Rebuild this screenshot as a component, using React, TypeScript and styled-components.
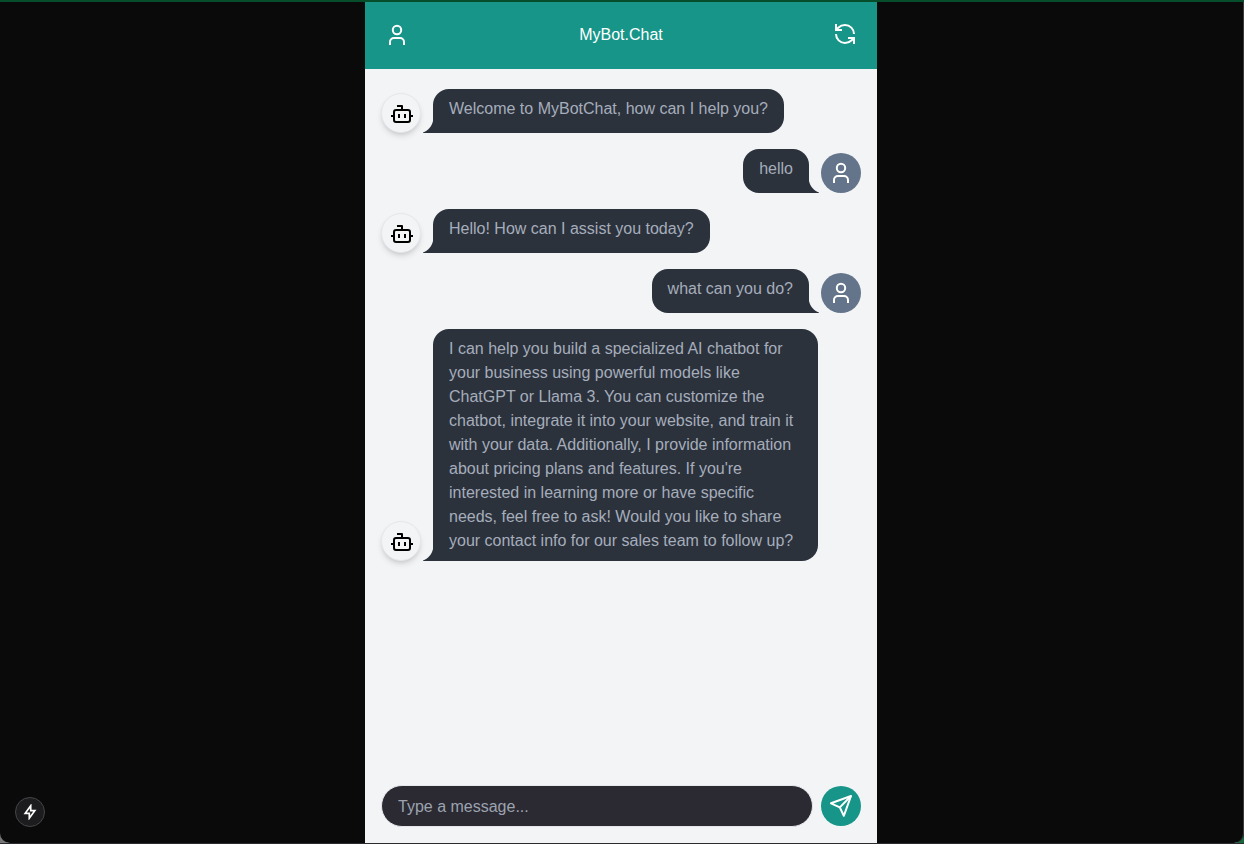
import React, { useState } from "react";
import styled, { createGlobalStyle, css } from "styled-components";
import { Bot } from "lucide-react";

const teal = "#169588";
const bubbleColor = "#2b323c";
const surface = "#f3f4f6";

const GlobalStyle = createGlobalStyle`
  *, *::before, *::after { box-sizing: border-box; }
  html, body, #root { height: 100%; }
  body {
    margin: 0;
    background: #0a0a0a;
    font-family: "Liberation Sans", Arial, sans-serif;
    font-size: 16px;
    line-height: 24px;
  }
  button, input { font: inherit; }
  button { border: 0; padding: 0; cursor: pointer; }
`;

const Page = styled.div`
  position: relative;
  display: flex;
  justify-content: center;
  height: 100%;
  min-height: 480px;
  padding-right: 2px;
  border-top: 2px solid #064e2b;
  border-bottom: 1px solid #2c2c30;
  overflow: hidden;
`;

const EdgeLine = styled.div`
  position: absolute;
  inset: 0;
  border-right: 1px solid #3c3c40;
  border-radius: 0 0 10px 10px;
  box-shadow: -6px 6px 0 #77777a, 6px 6px 0 #17663c;
  pointer-events: none;
`;

const Chat = styled.main`
  display: flex;
  flex-direction: column;
  width: 100%;
  max-width: 512px;
  background: ${surface};
`;

const Header = styled.header`
  display: flex;
  align-items: center;
  justify-content: space-between;
  height: 67px;
  padding: 0 20px 1px;
  background: ${teal};
  color: #fff;
`;

const Title = styled.h1`
  margin: 0;
  font-size: 16px;
  font-weight: 400;
`;

const HeaderButton = styled.button`
  display: flex;
  background: transparent;
  color: inherit;
`;

const Messages = styled.section`
  display: flex;
  flex: 1;
  flex-direction: column;
  gap: 16px;
  min-height: 0;
  padding: 20px 16px;
  overflow: hidden;
`;

const Row = styled.div<{ $own?: boolean }>`
  display: flex;
  flex-direction: ${(p) => (p.$own ? "row-reverse" : "row")};
  align-items: flex-end;
  gap: 12px;
`;

const Avatar = styled.div<{ $own?: boolean }>`
  display: flex;
  flex: none;
  align-items: center;
  justify-content: center;
  width: 40px;
  height: 40px;
  border-radius: 50%;
  ${(p) =>
    p.$own
      ? css`
          background: #64748b;
          color: #fff;
        `
      : css`
          padding: 2px 0 0 2px;
          border: 1px solid #e5e7eb;
          background: ${surface};
          color: #000;
          box-shadow: 0 4px 6px -1px rgba(0, 0, 0, 0.12), 0 2px 4px -2px rgba(0, 0, 0, 0.12);
        `}
`;

const Bubble = styled.div<{ $own?: boolean }>`
  position: relative;
  max-width: 385px;
  min-height: 44px;
  padding: 8px 16px;
  border-radius: ${(p) => (p.$own ? "16px 16px 0 16px" : "16px 16px 16px 0")};
  background: ${bubbleColor};
  color: #a6adbb;
`;

const TailShape = styled.svg<{ $own?: boolean }>`
  position: absolute;
  bottom: 0;
  ${(p) => (p.$own ? "left: 100%;" : "right: 100%; transform: scaleX(-1);")}
`;

const BubbleText = styled.p`
  margin: 0;
`;

const Composer = styled.form`
  display: flex;
  gap: 8px;
  padding: 16px;
`;

const MessageInput = styled.input`
  flex: 1;
  min-width: 0;
  height: 42px;
  padding: 2px 16px 0;
  border: 1px solid #e5e7eb;
  border-radius: 21px;
  background: #2b2a33;
  color: #fff;
  &::placeholder { color: #9ca3af; opacity: 1; }
`;

const SendButton = styled.button`
  display: flex;
  flex: none;
  align-items: center;
  align-self: center;
  justify-content: center;
  width: 40px;
  height: 40px;
  border-radius: 50%;
  background: ${teal};
  color: #fff;
`;

const DevButton = styled.button`
  position: absolute;
  bottom: 16px;
  left: 15px;
  display: flex;
  align-items: center;
  justify-content: center;
  width: 30px;
  height: 30px;
  border: 1px solid #454548;
  border-radius: 50%;
  background: #1c1c1f;
  color: #fff;
`;

const messages = [
  { own: false, text: "Welcome to MyBotChat, how can I help you?" },
  { own: true, text: "hello" },
  { own: false, text: "Hello! How can I assist you today?" },
  { own: true, text: "what can you do?" },
  {
    own: false,
    text: "I can help you build a specialized AI chatbot for your business using powerful models like ChatGPT or Llama 3. You can customize the chatbot, integrate it into your website, and train it with your data. Additionally, I provide information about pricing plans and features. If you're interested in learning more or have specific needs, feel free to ask! Would you like to share your contact info for our sales team to follow up?",
  },
];

function UserIcon() {
  return (
    <svg width="24" height="24" viewBox="0 0 24 24" fill="none" stroke="currentColor" strokeWidth="2" aria-hidden="true">
      <circle cx="12" cy="7" r="4.2" />
      <path d="M5 22v-3a4 4 0 0 1 4-4h6a4 4 0 0 1 4 4v3" />
    </svg>
  );
}

function RestartIcon() {
  return (
    <svg width="24" height="24" viewBox="0 0 24 24" fill="none" stroke="currentColor" strokeWidth="2" aria-hidden="true">
      <path d="M21 11a9 9 0 0 0-9-9 9.750 9.750 0 0 0-6.740 2.740L3 7" />
      <path d="M3 1v6h6" />
      <path d="M3 11a9 9 0 0 0 9 9 9.750 9.750 0 0 0 6.740-2.740L21 15" />
      <path d="M15 15h6v6" />
    </svg>
  );
}

function Tail({ own }: { own: boolean }) {
  return (
    <TailShape $own={own} width="12" height="12" viewBox="0 0 12 12" aria-hidden="true">
      <path d="M0 0C1 5 5 10 10 11.500V12H0Z" fill={bubbleColor} />
    </TailShape>
  );
}

function Message({ own, text }: { own: boolean; text: string }) {
  return (
    <Row $own={own}>
      <Avatar $own={own}>{own ? <UserIcon /> : <Bot size={24} strokeLinecap="square" />}</Avatar>
      <Bubble $own={own}>
        <BubbleText>{text}</BubbleText>
        <Tail own={own} />
      </Bubble>
    </Row>
  );
}

export default function App() {
  const [draft, setDraft] = useState("");
  return (
    <>
      <GlobalStyle />
      <Page>
        <Chat>
          <Header>
            <HeaderButton type="button" aria-label="Account">
              <UserIcon />
            </HeaderButton>
            <Title>MyBot.Chat</Title>
            <HeaderButton type="button" aria-label="Restart chat">
              <RestartIcon />
            </HeaderButton>
          </Header>
          <Messages aria-label="Conversation">
            {messages.map((m) => (
              <Message key={m.text} own={m.own} text={m.text} />
            ))}
          </Messages>
          <Composer onSubmit={(e) => e.preventDefault()}>
            <MessageInput
              aria-label="Message"
              placeholder="Type a message..."
              value={draft}
              onChange={(e) => setDraft(e.target.value)}
            />
            <SendButton type="submit" aria-label="Send">
              <svg width="24" height="24" viewBox="0 0 24 24" fill="none" stroke="currentColor" strokeWidth="2" strokeLinejoin="round" aria-hidden="true">
                <path d="M22 2 2 9.300 10.800 13.400 14.800 21.800Z" />
                <path d="M22 2 10.800 13.400" />
              </svg>
            </SendButton>
          </Composer>
        </Chat>
        <EdgeLine />
        <DevButton type="button" aria-label="Developer tools">
          <svg width="16" height="16" viewBox="0 0 16 16" fill="none" stroke="currentColor" strokeWidth="1.700" aria-hidden="true">
            <path d="M8.700 1.800 3.200 9.300H7.300V14.200L12.800 6.700H8.700Z" />
          </svg>
        </DevButton>
      </Page>
    </>
  );
}
